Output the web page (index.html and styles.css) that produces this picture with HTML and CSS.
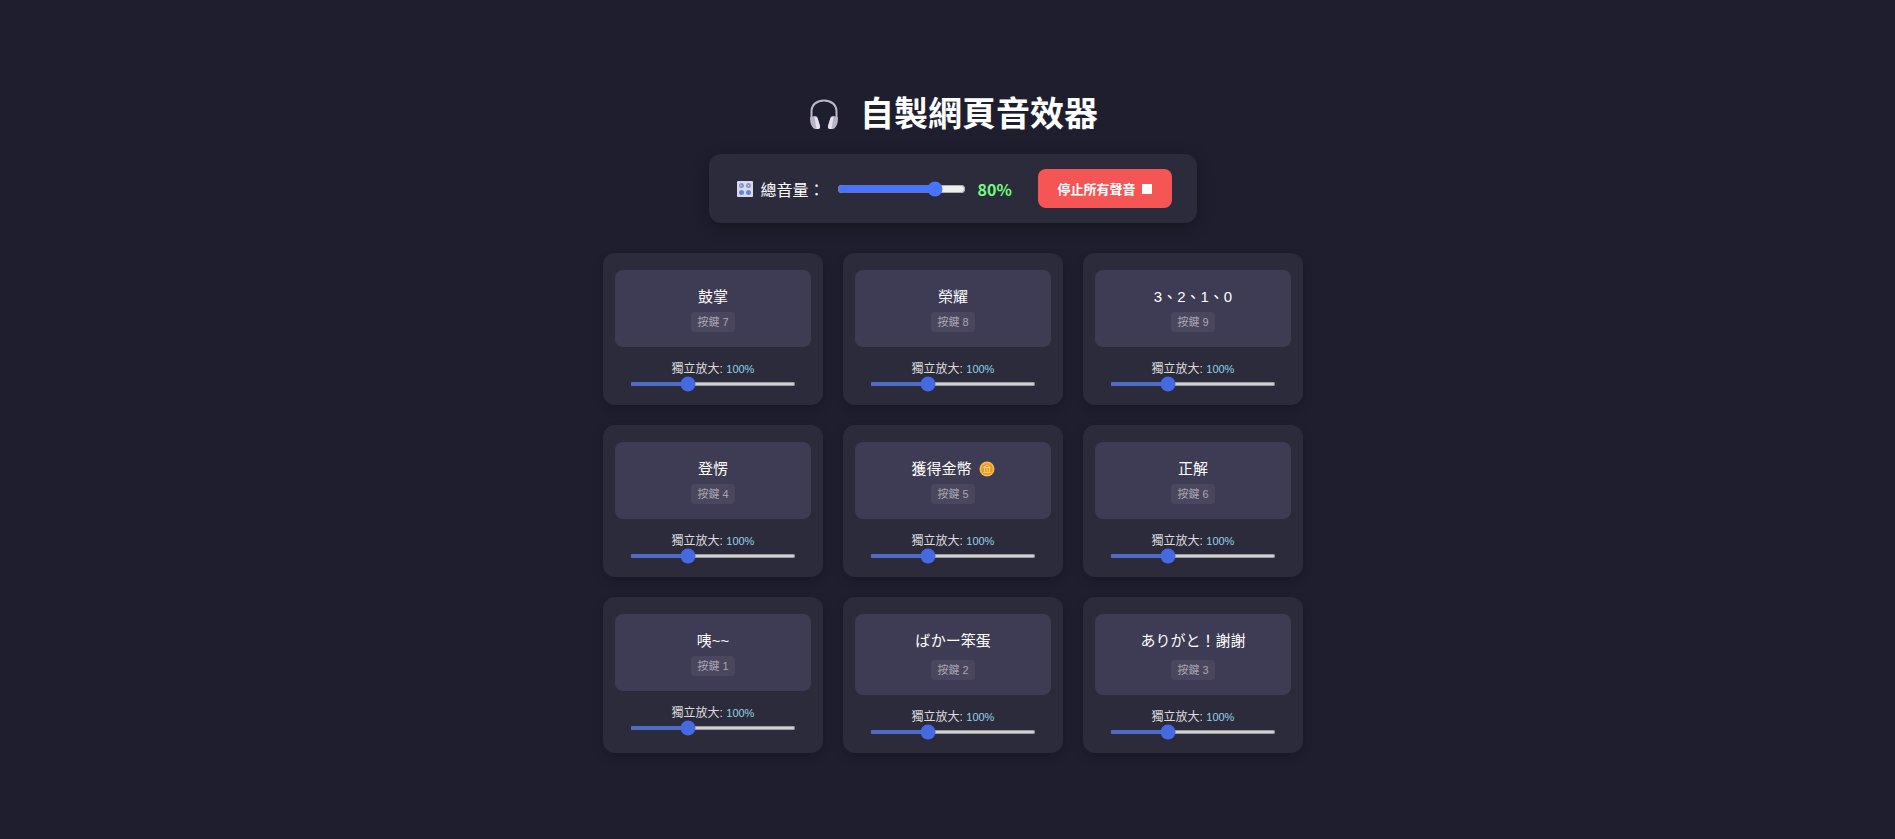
FILE: index.html
```html
<!DOCTYPE html>
<html lang="zh-Hant">
<head>
<meta charset="UTF-8">
<meta name="viewport" content="width=device-width, initial-scale=1.0">
<title>自製網頁音效器</title>
<link rel="stylesheet" href="styles.css">
</head>
<body>
<h1>
	<svg class="icon-title" viewBox="0 0 32 32" aria-hidden="true">
		<path d="M3.500 21V13.500C3.500 6.500 9 2.500 16 2.500S28.500 6.500 28.500 13.500V21" fill="none" stroke="#bdb8c8" stroke-width="2"/>
		<path d="M2 20q0-1.500 2-1.500l3-.5q2 0 2.500 2l2.500 8q.5 2.500-2 3H7Q2 29 2 20z" fill="#b9b4c6"/>
		<path d="M30 20q0-1.500-2-1.500l-3-.5q-2 0-2.500 2l-2.500 8q-.5 2.500 2 3h3Q30 29 30 20z" fill="#b9b4c6"/>
		<path d="M6.500 19q2-1 3 1l2.500 8q.5 2.500-2 3H8.500z" fill="#e4e0ec"/>
		<path d="M25.500 19q-2-1-3 1l-2.500 8q-.5 2.500 2 3h1.500z" fill="#e4e0ec"/>
	</svg>
	<span>自製網頁音效器</span>
</h1>
<div class="master">
	<label class="master-label" for="masterVol">
		<svg class="icon-knobs" viewBox="0 0 16 16" aria-hidden="true">
			<rect width="16" height="16" rx="1" fill="#dcd9ee"/>
			<circle cx="4.500" cy="4.500" r="2.500" fill="#8199cf"/>
			<circle cx="11.500" cy="4.500" r="2.500" fill="#8199cf"/>
			<circle cx="4.500" cy="11.500" r="2.500" fill="#6288d0"/>
			<circle cx="11.500" cy="11.500" r="2.500" fill="#6288d0"/>
			<path d="M3.500 4.500h1M11 5l1-1" stroke="#eef" stroke-width="1"/>
		</svg>
		總音量：
	</label>
	<input type="range" id="masterVol" min="0" max="100" value="80">
	<span class="master-num" id="masterNum">80%</span>
	<button class="stop-btn" id="stopBtn">停止所有聲音 <span class="stop-square"></span></button>
</div>
<div class="grid">
	<div class="card">
		<button class="pad"><span class="name">鼓掌</span><span class="key">按鍵 7</span></button>
		<label class="vol" for="vol7">獨立放大: <span>100%</span></label>
		<input type="range" id="vol7" min="0" max="300" value="100">
	</div>
	<div class="card">
		<button class="pad"><span class="name">榮耀</span><span class="key">按鍵 8</span></button>
		<label class="vol" for="vol8">獨立放大: <span>100%</span></label>
		<input type="range" id="vol8" min="0" max="300" value="100">
	</div>
	<div class="card">
		<button class="pad"><span class="name">3、2、1、0</span><span class="key">按鍵 9</span></button>
		<label class="vol" for="vol9">獨立放大: <span>100%</span></label>
		<input type="range" id="vol9" min="0" max="300" value="100">
	</div>
	<div class="card">
		<button class="pad"><span class="name">登愣</span><span class="key">按鍵 4</span></button>
		<label class="vol" for="vol4">獨立放大: <span>100%</span></label>
		<input type="range" id="vol4" min="0" max="300" value="100">
	</div>
	<div class="card">
		<button class="pad">
			<span class="name">獲得金幣
				<svg class="icon-coin" viewBox="0 0 16 16" aria-hidden="true">
					<circle cx="8" cy="8" r="7.500" fill="#fbbf4c"/>
					<circle cx="8" cy="8" r="6" fill="#e59a2f"/>
					<path d="M4.500 6.500L8 4l3.500 2.500zM5.500 7v4M8 7v4M10.500 7v4M4.500 11.500h7" fill="none" stroke="#ffcf62"/>
				</svg>
			</span>
			<span class="key">按鍵 5</span>
		</button>
		<label class="vol" for="vol5">獨立放大: <span>100%</span></label>
		<input type="range" id="vol5" min="0" max="300" value="100">
	</div>
	<div class="card">
		<button class="pad"><span class="name">正解</span><span class="key">按鍵 6</span></button>
		<label class="vol" for="vol6">獨立放大: <span>100%</span></label>
		<input type="range" id="vol6" min="0" max="300" value="100">
	</div>
	<div class="card">
		<button class="pad"><span class="name">咦~~</span><span class="key">按鍵 1</span></button>
		<label class="vol" for="vol1">獨立放大: <span>100%</span></label>
		<input type="range" id="vol1" min="0" max="300" value="100">
	</div>
	<div class="card">
		<button class="pad"><span class="name kana">ばかー笨蛋</span><span class="key">按鍵 2</span></button>
		<label class="vol" for="vol2">獨立放大: <span>100%</span></label>
		<input type="range" id="vol2" min="0" max="300" value="100">
	</div>
	<div class="card">
		<button class="pad"><span class="name kana">ありがと！謝謝</span><span class="key">按鍵 3</span></button>
		<label class="vol" for="vol3">獨立放大: <span>100%</span></label>
		<input type="range" id="vol3" min="0" max="300" value="100">
	</div>
</div>
</body>
</html>
```
FILE: styles.css
```css
*{
	box-sizing: border-box;
}
body{
	margin: 0;
	min-height: 100vh;
	padding: 0 0 0 11px;
	display: flex;
	flex-direction: column;
	align-items: center;
	justify-content: center;
	background: #1e1e2e;
	color: #ffffff;
	font-family: "Liberation Sans", "Noto Sans CJK TC", sans-serif;
	font-size: 16px;
}
h1{
	display: flex;
	align-items: center;
	gap: 20px;
	margin: 0 0 16px;
	padding-top: 4px;
	font-size: 34px;
	line-height: 48px;
}
.icon-title{
	width: 32px;
	height: 32px;
}
.master{
	display: flex;
	align-items: center;
	padding: 15px 25px;
	margin-bottom: 30px;
	background: #2c2b3c;
	border-radius: 12px;
	box-shadow: 0 4px 15px rgba(0,0,0,0.3);
}
.master-label{
	display: flex;
	align-items: center;
	gap: 7px;
	margin-right: 10px;
}
.icon-knobs{
	width: 16px;
	height: 16px;
	margin-left: 3px;
}
input[type="range"]{
	accent-color: #4a74ff;
	cursor: pointer;
}
.master-num{
	width: 50px;
	margin-left: 10px;
	color: #72fb7e;
	font-family: "Noto Sans CJK TC", sans-serif;
	font-weight: bold;
	line-height: 24px;
}
.stop-btn{
	display: flex;
	align-items: center;
	gap: 6px;
	height: 39px;
	padding: 0 20px;
	margin-left: 10px;
	border: none;
	border-radius: 8px;
	background: #f55555;
	color: #ffffff;
	font-family: inherit;
	font-size: 13px;
	font-weight: bold;
	cursor: pointer;
}
.stop-square{
	width: 10px;
	height: 10px;
	background: #ffffff;
}
.grid{
	display: grid;
	grid-template-columns: repeat(3, 220px);
	gap: 20px;
}
.card{
	display: flex;
	flex-direction: column;
	align-items: center;
	padding: 17px 12px;
	background: #2c2b3c;
	border-radius: 12px;
	box-shadow: 0 4px 10px rgba(0,0,0,0.2);
}
.pad{
	display: flex;
	flex-direction: column;
	align-items: center;
	gap: 4px;
	width: 100%;
	padding: 16px 15px 15px;
	border: none;
	border-radius: 8px;
	background: #3e3b54;
	color: #ffffff;
	font-family: inherit;
	cursor: pointer;
}
.name{
	display: flex;
	align-items: center;
	gap: 7px;
	font-size: 15px;
	line-height: 22px;
}
.name.kana{
	padding-bottom: 4px;
}
.icon-coin{
	width: 16px;
	height: 16px;
}
.key{
	padding: 0 6px;
	border-radius: 4px;
	background: rgba(255,255,255,0.06);
	color: #a9a6b4;
	font-size: 11px;
	line-height: 20px;
}
.vol{
	margin-top: 13px;
	color: #dddddd;
	font-size: 12px;
	line-height: 18px;
}
.vol span{
	color: #8fd3e8;
	font-size: 11px;
}
.card input[type="range"]{
	width: 166px;
	height: 4px;
	margin: 4px 0 2px;
	opacity: 0.85;
}
```
